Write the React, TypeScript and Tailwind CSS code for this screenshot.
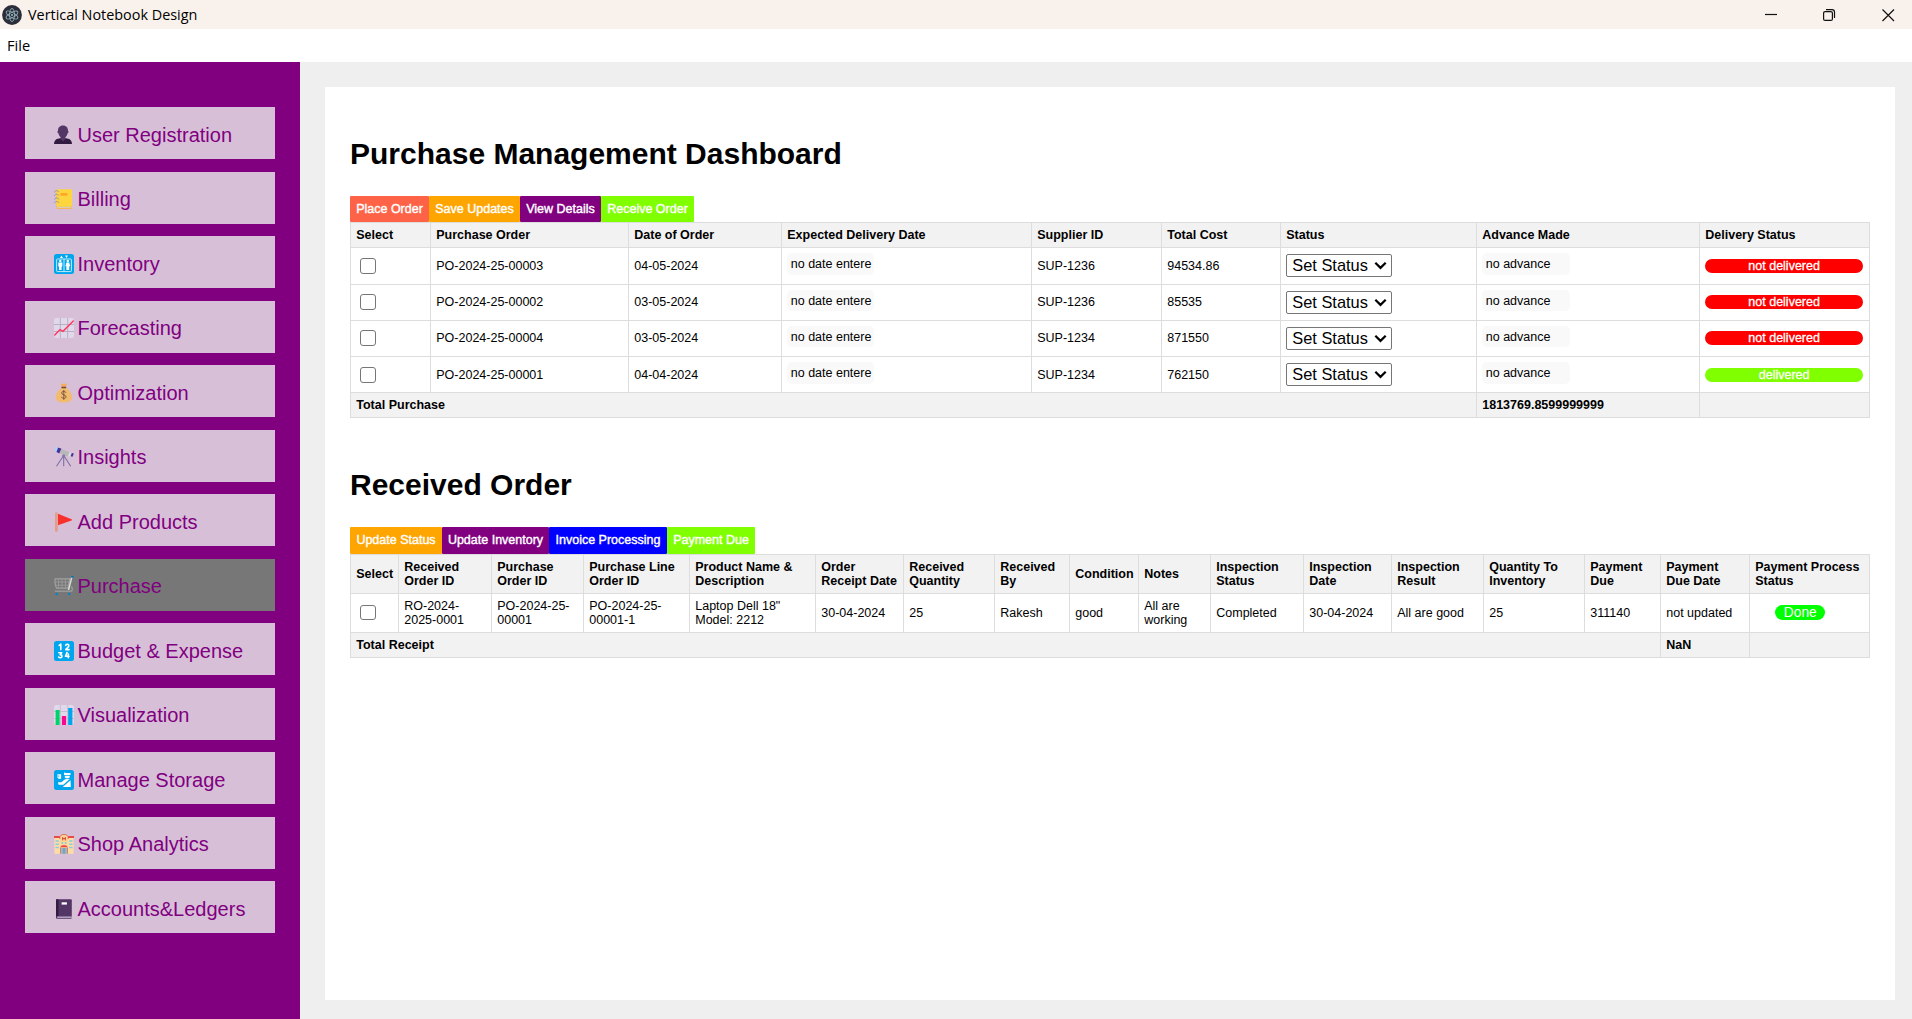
import React from "react";

const ICONS: Record<string, React.ReactNode> = {
  user: (
    <>
      <path d="M0 19c0-4 2.900-5.600 6.100-5.800h5.800c3.200.2 6.100 1.800 6.100 5.800z" fill="#321b41" />
      <path d="M6.700 11h4.600v3.200L9 16.400l-2.300-2.200z" fill="#533566" />
      <path d="M9 .5C5.700.5 3.900 2.800 4 5.700 3.200 6 3.400 8.100 4.400 8.300 5 11.200 6.800 13 9 13s4-1.800 4.600-4.700c1-.2 1.200-2.300.4-2.600C14.100 2.800 12.300.5 9 .5z" fill="#533566" />
    </>
  ),
  notebook: (
    <>
      <rect x="2.500" y="1" width="15.500" height="18.700" rx="1" fill="#ffb02e" />
      <rect x="3" y="17.500" width="14.500" height="1.300" fill="#d3d3d3" />
      <rect x="2.500" y="0.300" width="15.500" height="17.200" rx="1" fill="#fcd53f" />
      <rect x="6.500" y="4" width="7" height="2.800" rx="0.500" fill="#ffa628" />
      <g stroke="#9b9b9b" strokeWidth="1" fill="none">
        <path d="M.6 3.400c0-2.200 3.900-2.200 4.300-.2" />
        <path d="M.6 7c0-2.200 3.900-2.200 4.300-.2" />
        <path d="M.6 10.600c0-2.200 3.900-2.200 4.300-.2" />
        <path d="M.6 14.200c0-2.200 3.900-2.200 4.300-.2" />
      </g>
    </>
  ),
  elevator: (
    <>
      <rect width="20" height="20" rx="2.500" fill="#00a6ed" />
      <path d="M7.500 1.500 9 4H6zM11 1.500h3L12.500 4z" fill="#fff" />
      <rect x="2.600" y="5" width="14.800" height="12.600" rx="0.800" fill="none" stroke="#d8f2fd" strokeWidth="0.900" />
      <path d="M10 5v12.500" stroke="#d8f2fd" strokeWidth="0.900" />
      <g fill="#fff">
        <circle cx="6.300" cy="7" r="1.200" />
        <path d="M4.300 8.400h4v4H7.600V16H5v-3.600h-.7z" />
        <circle cx="13.800" cy="7" r="1.200" />
        <path d="M12.400 8.400h2.800l1 3.900h-1V16h-2.800v-3.700h-1z" />
      </g>
    </>
  ),
  trend: (
    <>
      <rect width="20" height="20" rx="2.500" fill="#e1d8ec" />
      <path d="M0 6.500h20M0 13.500h20M6.300 0v20M13.700 0v20" stroke="#b4acbc" strokeWidth="0.900" />
      <path d="M.8 17 6 11.600l3 1.700L19.300 3" stroke="#ff375f" strokeWidth="1.500" fill="none" strokeLinecap="round" />
    </>
  ),
  money: (
    <>
      <path d="M6.800.9 8.200.4l1.500.6 1.500-.6 1.700.5-1 3H7.700z" fill="#f3ad61" />
      <path d="M7.500 5h4.800c3 2 5.700 5.600 5.700 9.200 0 3.600-2.500 5.300-8.100 5.300s-8.200-1.700-8.200-5.300C1.700 10.600 4.500 7 7.500 5z" fill="#f1bb70" />
      <rect x="7.300" y="3.800" width="5" height="1.400" rx="0.600" fill="#6d4534" />
      <path d="M12 9.800c-.4-1-1.100-1.400-2.200-1.400-1.300 0-2.100.6-2.100 1.700 0 2.400 4.300 1.200 4.300 3.600 0 1.100-.9 1.700-2.200 1.700-1.200 0-2-.5-2.300-1.600M9.800 7v9.800" stroke="#7d5540" strokeWidth="1" fill="none" />
    </>
  ),
  telescope: (
    <>
      <path d="M9.700 8.500 2.500 19.300M9.700 8.500v10.800M9.700 8.500l7 10.800" stroke="#7b6fa6" strokeWidth="1.100" fill="none" />
      <path d="m6.500 1.500 9 3.700-1.500 4.500-8.700-4z" fill="#b8b8b8" />
      <path d="m3.500.5 3.800 1-2 5-3.300-1.700z" fill="#4b2fa0" />
      <path d="M2 .6 4.200.2 2.600 4.800.9 4.500z" fill="#9bdcff" />
      <path d="m15.500 5.200 2.300.7-1.300 3.900-2.500-.6z" fill="#dcdcdc" />
      <path d="m17.800 6 2 .5-1.200 3.300-2.100-.5z" fill="#4b2fa0" />
      <circle cx="9.700" cy="8.700" r="1.500" fill="#8379a8" />
    </>
  ),
  flag: (
    <>
      <rect x="1" y="0.300" width="2.800" height="19.500" rx="1.200" fill="#e39d89" />
      <path d="M4 1.700v11.600l13.500-4.700c.7-.3.7-1 0-1.300z" fill="#f8312f" />
    </>
  ),
  cart: (
    <>
      <path d="M1.200 2.800h14.500l-1.600 9.400H2.600C1.300 9.500.6 6 1.200 2.800z" fill="none" stroke="#a2a2a2" strokeWidth="1.200" />
      <path d="M4.600 3v9M8 3v9M11.400 3v9M1 6h14M1.300 9.200h13.300" stroke="#9b9b9b" strokeWidth="0.900" />
      <path d="M17.800 1.200 14.500 14" stroke="#dadada" strokeWidth="1.500" />
      <path d="M17 10.500c2 1.200 2 4.800-1 4.800H.8" stroke="#979797" strokeWidth="1.500" fill="none" />
      <path d="M17 .8h2.600" stroke="#0074ba" strokeWidth="1.500" />
      <circle cx="2.600" cy="18" r="1.200" fill="#0084ce" />
      <circle cx="15.300" cy="18" r="1.200" fill="#0084ce" />
    </>
  ),
  numbers: (
    <>
      <rect width="20" height="20" rx="2.500" fill="#00a6ed" />
      <g stroke="#fff" strokeWidth="1.600" fill="none" strokeLinecap="round" strokeLinejoin="round">
        <path d="M5.200 4.400 6.800 3.200v5.400" />
        <path d="M11.700 4.300c.8-1.600 3.300-1.200 3.100.6-.1 1.300-2 2-3.100 3.700h3.400" />
        <path d="M4.800 11.800h2.900l-1.500 2c2.300-.1 2.200 2.800.2 2.900-.8 0-1.300-.2-1.800-.7" />
        <path d="m13 11.600-1.500 3.600h3.600M14.300 13v3.800" />
      </g>
    </>
  ),
  bars: (
    <>
      <rect width="20" height="20" rx="2.500" fill="#e1d8ec" />
      <path d="M0 6.500h20M0 13.500h20M6.300 0v20M13.700 0v20" stroke="#c3bacd" strokeWidth="0.900" />
      <rect x="1.600" y="5" width="4" height="15" fill="#00d26a" />
      <rect x="7.900" y="11" width="4.200" height="9" fill="#f70a8d" />
      <rect x="14.200" y="3" width="4.200" height="17" fill="#00a6ed" />
    </>
  ),
  customs: (
    <>
      <rect width="20" height="20" rx="2.500" fill="#00a6ed" />
      <g fill="#fff">
        <path d="M3.500 4.200h3.600v4.600H4.600L3.500 7.700z" />
        <path d="m10 2.600 2.300.3h4.200v2H10zM10.800 5.700h4.900v1.600c0 1.500-4.900 1.500-4.900 0z" />
        <path d="M4 12.300h3.400l3.600-3 4.700-.2L9.300 14.800H4.500z" />
        <path d="m16.500 10.200.3 6.800H8.700z" />
      </g>
      <path d="M4.800 5.300v2" stroke="#00a6ed" strokeWidth="0.700" />
    </>
  ),
  hospital: (
    <>
      <rect x="0.500" y="3.500" width="19" height="16.300" fill="#ffdca4" />
      <path d="M0 2h6v2H0zM14 2h6v2h-6z" fill="#e5484d" />
      <path d="M5.800 19.800V4C5.800 1.500 7.600.4 10 .4s4.200 1.100 4.200 3.600v15.800z" fill="#ffd596" />
      <path d="M5.800 5V4C5.800 1.500 7.600.4 10 .4s4.200 1.100 4.200 3.600v1" stroke="#e9604f" strokeWidth="0.900" fill="none" />
      <path d="M8.700 3v3.400M11.300 3v3.400M8.700 4.700h2.600" stroke="#d3382f" strokeWidth="0.900" />
      <path d="M1.500 7h3.300M1.500 10.300h3.300M1.500 13.600h3.300M15.200 7h3.300M15.200 10.300h3.300M15.200 13.600h3.300M7.400 9h1.900M10.700 9h1.900" stroke="#80cdea" strokeWidth="1.500" />
      <path d="M6.500 13.200c0-2.500 7-2.500 7 0z" fill="#e5484d" />
      <rect x="7.200" y="14" width="5.600" height="5.800" fill="#6ebce0" />
      <path d="M6.500 13.400v6.400M13.500 13.400v6.400M10 14v5.800" stroke="#e5604c" strokeWidth="0.800" />
    </>
  ),
  ledger: (
    <>
      <rect x="2" y="0.300" width="15.800" height="19.500" rx="1" fill="#533566" />
      <path d="M3 .3h1.500v17H2V1.300c0-.6.400-1 1-1z" fill="#321b41" />
      <rect x="3.200" y="17.600" width="14.600" height="1.100" fill="#d9cfe3" />
      <rect x="7.600" y="3.300" width="5.300" height="2.300" fill="#fff" />
    </>
  ),
};

const MENU = [
  ["user", "User Registration"],
  ["notebook", "Billing"],
  ["elevator", "Inventory"],
  ["trend", "Forecasting"],
  ["money", "Optimization"],
  ["telescope", "Insights"],
  ["flag", "Add Products"],
  ["cart", "Purchase"],
  ["numbers", "Budget & Expense"],
  ["bars", "Visualization"],
  ["customs", "Manage Storage"],
  ["hospital", "Shop Analytics"],
  ["ledger", "Accounts&Ledgers"],
];

const ORDERS = [
  { id: "PO-2024-25-00003", date: "04-05-2024", sup: "SUP-1236", cost: "94534.86", delivered: false, low: true, h: "h-[37px]" },
  { id: "PO-2024-25-00002", date: "03-05-2024", sup: "SUP-1236", cost: "85535", delivered: false, low: false, h: "h-[36px]" },
  { id: "PO-2024-25-00004", date: "03-05-2024", sup: "SUP-1234", cost: "871550", delivered: false, low: false, h: "h-[36px]" },
  { id: "PO-2024-25-00001", date: "04-04-2024", sup: "SUP-1234", cost: "762150", delivered: true, low: true, h: "h-[36px]" },
];

const COLS1 = [80, 198, 153, 250, 130, 119, 196, 223, 170];
const COLS2 = [48, 93, 92, 106, 126, 88, 91, 75, 69, 72, 93, 88, 92, 101, 76, 89, 120];

const HEAD1 = ["Select", "Purchase Order", "Date of Order", "Expected Delivery Date", "Supplier ID", "Total Cost", "Status", "Advance Made", "Delivery Status"];
const HEAD2 = [
  "Select", "Received\nOrder ID", "Purchase\nOrder ID", "Purchase Line\nOrder ID", "Product Name &\nDescription", "Order\nReceipt Date",
  "Received\nQuantity", "Received\nBy", "Condition", "Notes", "Inspection\nStatus", "Inspection\nDate", "Inspection\nResult",
  "Quantity To\nInventory", "Payment\nDue", "Payment\nDue Date", "Payment Process\nStatus",
];
const RECEIPT = [
  "RO-2024-\n2025-0001", "PO-2024-25-\n00001", "PO-2024-25-\n00001-1", "Laptop Dell 18\"\nModel: 2212", "30-04-2024", "25", "Rakesh", "good",
  "All are\nworking", "Completed", "30-04-2024", "All are good", "25", "311140", "not updated",
];

const TABLE = "w-[1520px] table-fixed border-separate border-spacing-0 border-l border-t border-[#ddd] text-[12.5px] leading-[14px] whitespace-pre";
const CELL = "border-r border-b border-[#ddd] p-0 pl-[5.25px] text-left";

function Checkbox() {
  return <span className="ml-[4px] block size-[15.5px] rounded-[3px] border border-[#767676] bg-white" />;
}

function Cols({ widths }: { widths: number[] }) {
  return (
    <colgroup>
      {widths.map((w, i) => (
        <col key={i} style={{ width: w }} />
      ))}
    </colgroup>
  );
}

function Head({ labels, height }: { labels: string[]; height: string }) {
  return (
    <thead>
      <tr className={height}>
        {labels.map((l, i) => (
          <th key={i} className={CELL + " bg-[#f2f2f2] align-middle font-bold"}>{l}</th>
        ))}
      </tr>
    </thead>
  );
}

function Toolbar({ items, height }: { items: string[][]; height: string }) {
  return (
    <div className={"flex text-[12.5px] leading-[14px] text-white " + height}>
      {items.map(([label, cls]) => (
        <button key={label} className={"rounded-[1px] pb-px text-center whitespace-nowrap [-webkit-text-stroke:0.4px_white] " + cls}>{label}</button>
      ))}
    </div>
  );
}

function StatusSelect() {
  return (
    <div className="flex h-[23px] w-[106px] items-center justify-between rounded-[2px] border border-[#767676] bg-white pr-[4px] pl-[5px] text-[16.4px] leading-[20px]">
      <span className="mb-[2px]">Set Status</span>
      <svg width="13" height="9" viewBox="0 0 13 9" fill="none" stroke="#000" strokeWidth="2.200">
        <path d="m1.300 1.700 5.200 5.200 5.200-5.200" />
      </svg>
    </div>
  );
}

export default function App() {
  return (
    <div className="flex h-[1019px] w-[1912px] flex-col overflow-hidden bg-white font-['Liberation_Sans',Arial,sans-serif] text-black">
      <header className="flex h-[29px] items-center bg-[#f9f1ec] pl-[2px]">
        <svg width="20" height="20" viewBox="0 0 20 20" fill="none">
          <circle cx="10" cy="10" r="9.900" fill="#2b2e3a" />
          <g stroke="#a9cdd6" strokeWidth="0.900" opacity="0.800">
            <ellipse cx="10" cy="10" rx="6.600" ry="2.500" transform="rotate(30 10 10)" />
            <ellipse cx="10" cy="10" rx="6.600" ry="2.500" transform="rotate(90 10 10)" />
            <ellipse cx="10" cy="10" rx="6.600" ry="2.500" transform="rotate(150 10 10)" />
          </g>
          <circle cx="10" cy="10" r="0.900" fill="#a9cdd6" />
        </svg>
        <span className="ml-[6px] font-['Open_Sans',sans-serif] text-[14.4px] leading-[20px] whitespace-nowrap">Vertical Notebook Design</span>
        <svg className="mr-[17px] ml-auto" width="130" height="14" viewBox="0 0 130 14" fill="none" stroke="#111" strokeWidth="1.200">
          <path d="M0 6.500h12" />
          <rect x="58.600" y="3.600" width="8.800" height="8.800" rx="1.500" />
          <path d="M61 1.600h6c1.500 0 2.500 1 2.500 2.500V10" />
          <path d="m117.500 1.500 11.500 11.500M129 1.500 117.500 13" />
        </svg>
      </header>
      <nav className="flex h-[33px] items-center bg-white pb-px pl-[7px] font-['Open_Sans',sans-serif] text-[14.6px] leading-[20px]">File</nav>

      <div className="flex flex-1 bg-[#efefef]">
        <aside className="flex w-[300px] flex-col gap-[12.5px] bg-[#800080] px-[25px] pt-[45px]">
          {MENU.map(([icon, label]) => (
            <button
              key={label}
              className={"flex h-[52px] shrink-0 items-center pl-[29px] text-[20px] leading-[24px] whitespace-nowrap text-[#800080] " + (icon === "cart" ? "bg-[#777]" : "bg-[#d8bfd8]")}
            >
              <svg className="mt-[3px]" width="20" height="20" viewBox="0 0 20 20">{ICONS[icon]}</svg>
              <span className="mt-[3px] ml-[3.5px]">{label}</span>
            </button>
          ))}
        </aside>

        <main className="mt-[25px] ml-[25px] h-[913px] w-[1570px] bg-white px-[25px]">
          <h1 className="pt-[50px] text-[30px] leading-[34px] font-bold">Purchase Management Dashboard</h1>
          <div className="h-[25px]" />
          <Toolbar
            height="h-[26px]"
            items={[
              ["Place Order", "w-[79px] bg-[#ff6347]"],
              ["Save Updates", "w-[91px] bg-[#ffa500]"],
              ["View Details", "w-[81px] bg-[#800080]"],
              ["Receive Order", "w-[93px] bg-[#7fff00]"],
            ]}
          />
          <table className={TABLE}>
            <Cols widths={COLS1} />
            <Head labels={HEAD1} height="h-[25px]" />
            <tbody>
              {ORDERS.map((o) => {
                const text = CELL + " align-top " + (o.low ? "pt-[11px]" : "pt-[10px]");
                const box = CELL + " align-top " + (o.low ? "pt-[10px]" : "pt-[9px]");
                const field = "rounded-[5px] bg-[#f9f9f9] pt-[4px] pl-[3.5px] " + (o.low ? "h-[22px]" : "h-[21px]");
                return (
                  <tr key={o.id} className={o.h}>
                    <td className={box}><Checkbox /></td>
                    <td className={text}>{o.id}</td>
                    <td className={text}>{o.date}</td>
                    <td className={CELL + " pt-[5px] align-top"}><div className={field + " w-[87px]"}>no date entere</div></td>
                    <td className={text}>{o.sup}</td>
                    <td className={text}>{o.cost}</td>
                    <td className={CELL + " pt-[6px] align-top"}><StatusSelect /></td>
                    <td className={CELL + " pt-[5px] align-top"}><div className={field + " w-[88px]"}>no advance</div></td>
                    <td className={text + " pr-[6px]"}>
                      <div className={"h-[14px] rounded-full text-center text-white [-webkit-text-stroke:0.3px_white] " + (o.delivered ? "bg-[#7fff00]" : "bg-[#ff0000]")}>
                        {o.delivered ? "delivered" : "not delivered"}
                      </div>
                    </td>
                  </tr>
                );
              })}
              <tr className="h-[25px] bg-[#f2f2f2] font-bold">
                <td colSpan={7} className={CELL}>Total Purchase</td>
                <td className={CELL}>1813769.8599999999</td>
                <td className={CELL} />
              </tr>
            </tbody>
          </table>

          <h2 className="mt-[50px] text-[30px] leading-[34px] font-bold">Received Order</h2>
          <div className="h-[25px]" />
          <Toolbar
            height="h-[27px]"
            items={[
              ["Update Status", "w-[92px] bg-[#ffa500]"],
              ["Update Inventory", "w-[107px] bg-[#800080]"],
              ["Invoice Processing", "w-[118px] bg-[#0000ff]"],
              ["Payment Due", "w-[88px] bg-[#7fff00]"],
            ]}
          />
          <table className={TABLE}>
            <Cols widths={COLS2} />
            <Head labels={HEAD2} height="h-[39px]" />
            <tbody>
              <tr className="h-[39px]">
                <td className={CELL + " pb-px"}><Checkbox /></td>
                {RECEIPT.map((v, i) => (
                  <td key={i} className={CELL}>{v}</td>
                ))}
                <td className={CELL}>
                  <div className="mb-px ml-[20px] h-[15px] w-[50px] rounded-full bg-[#00ff00] text-center text-[13.75px] leading-[15px] text-white">Done</div>
                </td>
              </tr>
              <tr className="h-[25px] bg-[#f2f2f2] font-bold">
                <td colSpan={15} className={CELL}>Total Receipt</td>
                <td className={CELL}>NaN</td>
                <td className={CELL} />
              </tr>
            </tbody>
          </table>
        </main>
      </div>
    </div>
  );
}
